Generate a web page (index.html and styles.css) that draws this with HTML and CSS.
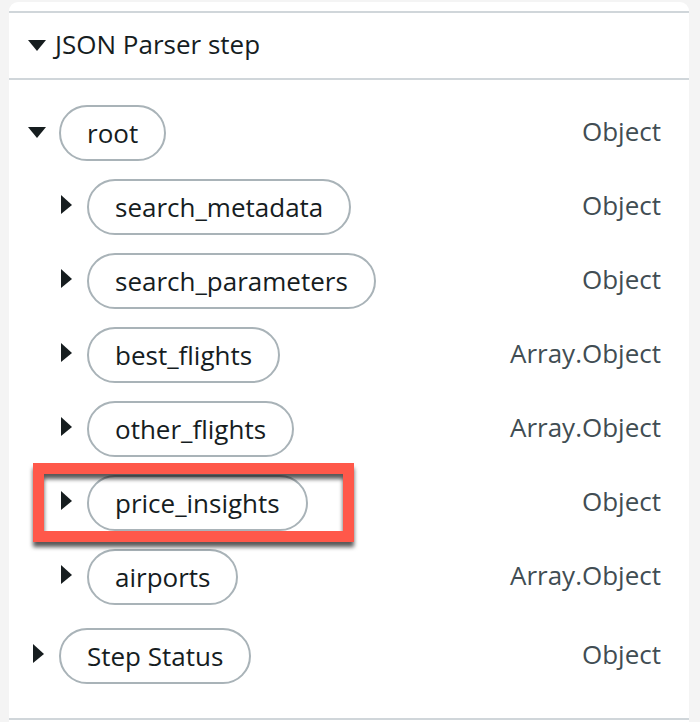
FILE: index.html
```
<!DOCTYPE html>
<html lang="en">
<head>
<meta charset="utf-8">
<title>JSON Parser step</title>
<link rel="stylesheet" href="styles.css">
</head>
<body>
<main class="panel">
  <h1 class="panel-header">
    <button class="header-toggle" type="button" aria-expanded="true">
      <svg class="caret" viewBox="0 0 20 20" aria-hidden="true"><path d="M1 6H19L10 17Z"/></svg>
      <span>JSON Parser step</span>
    </button>
  </h1>
  <ul class="tree">
    <li>
      <div class="row">
        <button class="toggle" type="button" aria-label="Collapse root" aria-expanded="true"><svg class="caret" viewBox="0 0 20 20" aria-hidden="true"><path d="M1 6H19L10 17Z"/></svg></button>
        <button class="pill" type="button">root</button>
        <span class="type">Object</span>
      </div>
      <ul class="children">
        <li class="row">
          <button class="toggle" type="button" aria-label="Expand search_metadata" aria-expanded="false"><svg class="caret" viewBox="0 0 20 20" aria-hidden="true"><path d="M6 0L17 10L6 19Z"/></svg></button>
          <button class="pill" type="button">search_metadata</button>
          <span class="type">Object</span>
        </li>
        <li class="row">
          <button class="toggle" type="button" aria-label="Expand search_parameters" aria-expanded="false"><svg class="caret" viewBox="0 0 20 20" aria-hidden="true"><path d="M6 0L17 10L6 19Z"/></svg></button>
          <button class="pill" type="button">search_parameters</button>
          <span class="type">Object</span>
        </li>
        <li class="row">
          <button class="toggle" type="button" aria-label="Expand best_flights" aria-expanded="false"><svg class="caret" viewBox="0 0 20 20" aria-hidden="true"><path d="M6 0L17 10L6 19Z"/></svg></button>
          <button class="pill" type="button">best_flights</button>
          <span class="type">Array.Object</span>
        </li>
        <li class="row">
          <button class="toggle" type="button" aria-label="Expand other_flights" aria-expanded="false"><svg class="caret" viewBox="0 0 20 20" aria-hidden="true"><path d="M6 0L17 10L6 19Z"/></svg></button>
          <button class="pill" type="button">other_flights</button>
          <span class="type">Array.Object</span>
        </li>
        <li class="row">
          <div class="marked">
            <button class="toggle" type="button" aria-label="Expand price_insights" aria-expanded="false"><svg class="caret" viewBox="0 0 20 20" aria-hidden="true"><path d="M6 0L17 10L6 19Z"/></svg></button>
            <button class="pill" type="button">price_insights</button>
          </div>
          <span class="type">Object</span>
        </li>
        <li class="row">
          <button class="toggle" type="button" aria-label="Expand airports" aria-expanded="false"><svg class="caret" viewBox="0 0 20 20" aria-hidden="true"><path d="M6 0L17 10L6 19Z"/></svg></button>
          <button class="pill" type="button">airports</button>
          <span class="type">Array.Object</span>
        </li>
      </ul>
    </li>
    <li class="row">
      <button class="toggle" type="button" aria-label="Expand Step Status" aria-expanded="false"><svg class="caret" viewBox="0 0 20 20" aria-hidden="true"><path d="M6 0L17 10L6 19Z"/></svg></button>
      <button class="pill" type="button">Step Status</button>
      <span class="type">Object</span>
    </li>
  </ul>
</main>
</body>
</html>
```
FILE: styles.css
```
* {
  box-sizing: border-box;
}

body {
  margin: 0;
  padding: 2px 11px 0 9px;
  background: #f4f4f4;
  color: #161d1f;
  font-family: "Open Sans", "Noto Sans", sans-serif;
  font-size: 26px;
  line-height: 36px;
}

button {
  margin: 0;
  padding: 0;
  border: 0;
  background: none;
  color: inherit;
  font: inherit;
  cursor: pointer;
}

ul {
  margin: 0;
  padding: 0;
  list-style: none;
}

.panel {
  padding: 9px 0 2px;
  border-radius: 9px 9px 0 0;
  background: #fff;
}

.panel-header {
  margin: 0;
  padding: 13px 18px 16px;
  border-top: 2px solid #d0d6da;
  border-bottom: 2px solid #d0d6da;
  font-size: 26px;
  font-weight: 400;
}

.header-toggle {
  display: flex;
  align-items: center;
  gap: 8px;
}

.caret {
  display: block;
  width: 20px;
  height: 20px;
  fill: #161d1f;
}

.tree {
  display: grid;
  gap: 23px;
  padding: 25px 28px 34px 18px;
  border-bottom: 2px solid #d0d6da;
}

.children {
  display: grid;
  gap: 18px;
  margin-top: 18px;
  padding-left: 28px;
}

.row,
.marked {
  display: flex;
  align-items: center;
}

.toggle {
  margin-right: 12px;
  padding-bottom: 4px;
}

.pill {
  height: 56px;
  padding: 0 26px;
  border: 2px solid #a9b3b8;
  border-radius: 28px;
  white-space: nowrap;
}

.type {
  margin-left: auto;
  padding-bottom: 4px;
  color: #414d53;
}

.marked {
  position: relative;
}

.marked::after {
  content: "";
  position: absolute;
  inset: -12px -46px -11px -22px;
  border: 11px solid #ff584a;
  filter: drop-shadow(0 5px 2px rgba(0, 0, 0, 0.65));
  pointer-events: none;
}
```
